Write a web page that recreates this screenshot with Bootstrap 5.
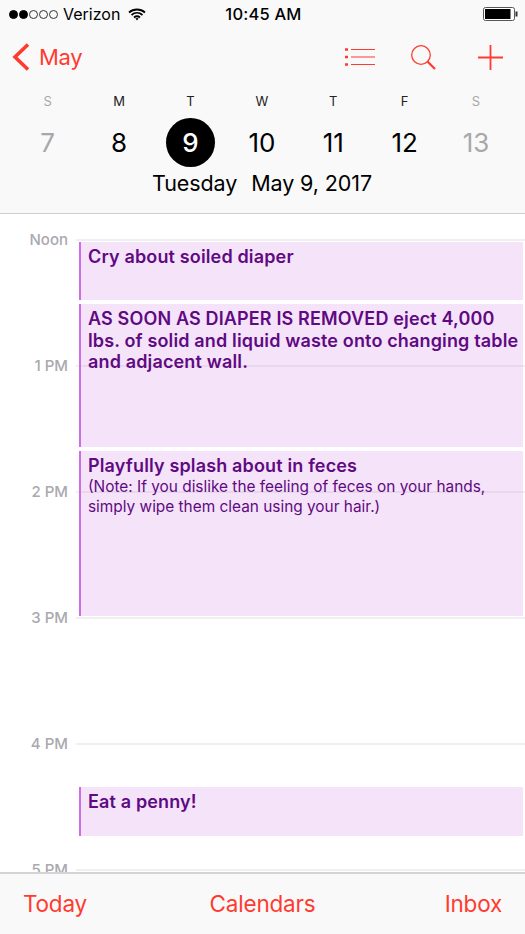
<!DOCTYPE html>
<html lang="en">

<head>
  <meta charset="UTF-8" />
  <title>Calendar</title>
  <link href="https://cdn.jsdelivr.net/npm/bootstrap@5.3.0/dist/css/bootstrap.min.css" rel="stylesheet" />
  <script src="https://cdn.jsdelivr.net/npm/bootstrap@5.3.0/dist/js/bootstrap.bundle.min.js"></script>
  <style>
    body {
      font-family: Inter, "Liberation Sans", sans-serif;
      background: #fff;
      color: #000;
    }

    .cal-app {
      height: 934px;
      overflow: hidden;
    }

    .cal-head {
      height: 214px;
      background: #f9f9f9;
      border-bottom: 1px solid #cfcfcf;
    }

    .status-bar {
      height: 28px;
      padding: 0 7px 0 9px;
      font-size: 16px;
      line-height: 28px;
    }

    .status-side {
      width: 190px;
    }

    .sig-dot {
      width: 9px;
      height: 9px;
      border-radius: 50%;
      border: 1px solid #333;
      margin-right: 1px;
    }

    .sig-dot.on {
      background: #000;
      border-color: #000;
    }

    .status-time {
      font-weight: 500;
      font-size: 16.5px;
      letter-spacing: 0.2px;
    }

    .red-bar {
      height: 58px;
      padding-right: 22px;
      color: #ff3b30;
    }

    .back-link {
      color: #ff3b30;
      font-size: 22px;
      padding-left: 11px;
      gap: 8px;
      letter-spacing: -0.3px;
    }

    .list-ico {
      margin-right: 36px;
    }

    .find-ico {
      margin-right: 42px;
    }

    .week-grid {
      display: grid;
      grid-template-columns: repeat(7, 71.4px);
      padding: 7px 0 0 12px;
      text-align: center;
    }

    .day-letter {
      font-size: 13px;
      line-height: 16px;
      color: #222;
    }

    .day-num {
      font-size: 26px;
      height: 50px;
      line-height: 50px;
      margin-top: 9px;
    }

    .day-off {
      color: #a8a8a8;
    }

    .day-today {
      width: 49px;
      height: 49px;
      line-height: 49px;
      margin: 9px auto 0;
      border-radius: 50%;
      background: #000;
      color: #fff;
      font-weight: 500;
    }

    .date-line {
      font-size: 21.5px;
      line-height: 28px;
      gap: 14px;
      margin-top: 1px;
      padding-left: 152px;
      letter-spacing: -0.1px;
    }

    .day-view {
      position: relative;
      flex: 1 1 0;
      overflow: hidden;
      padding-top: 18px;
    }

    .hour-row {
      height: 126px;
    }

    .hour-label {
      width: 68px;
      margin-right: 8px;
      text-align: right;
      font-size: 15px;
      line-height: 16px;
      color: #a9a9ae;
      font-weight: 500;
    }

    .hour-line {
      height: 2px;
      margin-top: 7px;
      background: #f0f0f0;
    }

    .cal-event {
      position: absolute;
      left: 79px;
      right: 2px;
      padding: 4px 0 0 7px;
      background: rgba(204, 115, 225, 0.2);
      border-left: 2px solid #cc6ee6;
      color: #5f0a82;
      font-size: 15.4px;
      line-height: 20px;
    }

    .cal-event b {
      display: block;
      font-size: 18px;
      font-weight: 600;
      line-height: 21.700px;
      letter-spacing: 0.15px;
    }

    .ev-one {
      top: 28px;
      height: 58px;
    }

    .ev-two {
      top: 90px;
      height: 143px;
    }

    .ev-three {
      top: 237px;
      height: 165px;
    }

    .ev-four {
      top: 573px;
      height: 49px;
    }

    .cal-foot {
      height: 62px;
      padding: 0 23px;
      background: #f9f9f9;
      border-top: 2px solid #d4d4d4;
      color: #ff3b30;
      font-size: 22.500px;
      letter-spacing: -0.2px;
    }

    .foot-side {
      flex: 1 1 0;
    }
  </style>
</head>

<body>
  <div class="cal-app d-flex flex-column">
    <header class="cal-head">
      <div class="status-bar d-flex align-items-center justify-content-between">
        <div class="status-side d-flex align-items-center">
          <span class="sig-dot on"></span><span class="sig-dot on"></span><span class="sig-dot"></span><span
            class="sig-dot"></span><span class="sig-dot"></span>
          <span class="ms-1">Verizon</span>
          <svg class="ms-2" width="18" height="13" viewBox="0 0 18 13">
            <path d="M1 4.500C5.500.5 12.500.5 17 4.500M3.500 7C6.800 4.200 11.200 4.200 14.500 7M6 9.500C7.800 8 10.200 8 12 9.500" fill="none" stroke="#000" stroke-width="1.800" />
            <path d="M7.400 10.600C8.300 9.900 9.700 9.900 10.600 10.600L9 12.500Z" />
          </svg>
        </div>
        <div class="status-time">10:45 AM</div>
        <div class="status-side d-flex justify-content-end">
          <svg width="35" height="14" viewBox="0 0 35 14">
            <rect x="0.500" y="0.500" width="31" height="13" rx="2" fill="#fff" stroke="#555" />
            <rect x="2" y="2" width="25.500" height="10" />
            <path d="M32.500 4.500h2v5h-2z" fill="#333" />
          </svg>
        </div>
      </div>

      <div class="red-bar d-flex align-items-center justify-content-between">
        <a class="back-link d-flex align-items-center text-decoration-none" href="#">
          <svg width="20" height="30" viewBox="0 0 20 30">
            <path d="M17 2.500 4 15l13 12.500" fill="none" stroke="#ff3b30" stroke-width="3.600" />
          </svg>
          May
        </a>
        <div class="d-flex align-items-center">
          <svg width="30" height="18" viewBox="0 0 30 18" class="list-ico">
            <path d="M0 1.500h3M0 9h3M0 16.500h3" stroke="#ff3b30" stroke-width="2.600" />
            <path d="M6 1.500h24M6 9h24M6 16.500h24" stroke="#ff3b30" stroke-width="1.200" />
          </svg>
          <svg width="25" height="25" viewBox="0 0 25 25" class="find-ico">
            <circle cx="10" cy="10" r="9.300" fill="none" stroke="#ff3b30" stroke-width="1.300" />
            <path d="M16.500 16.500 24 24" stroke="#ff3b30" stroke-width="2.200" />
          </svg>
          <svg width="25" height="25" viewBox="0 0 25 25">
            <path d="M12.500 0v25M0 12.500h25" stroke="#ff3b30" stroke-width="1.800" />
          </svg>
        </div>
      </div>

      <div class="week-grid">
        <div class="day-letter day-off">S</div>
        <div class="day-letter">M</div>
        <div class="day-letter">T</div>
        <div class="day-letter">W</div>
        <div class="day-letter">T</div>
        <div class="day-letter">F</div>
        <div class="day-letter day-off">S</div>
        <div class="day-num day-off">7</div>
        <div class="day-num">8</div>
        <div class="day-num day-today">9</div>
        <div class="day-num">10</div>
        <div class="day-num">11</div>
        <div class="day-num">12</div>
        <div class="day-num day-off">13</div>
      </div>
      <div class="date-line d-flex"><span>Tuesday</span><span>May 9, 2017</span></div>
    </header>

    <main class="day-view">
      <div class="hour-row d-flex"><div class="hour-label">Noon</div><div class="hour-line flex-grow-1"></div></div>
      <div class="hour-row d-flex"><div class="hour-label">1 PM</div><div class="hour-line flex-grow-1"></div></div>
      <div class="hour-row d-flex"><div class="hour-label">2 PM</div><div class="hour-line flex-grow-1"></div></div>
      <div class="hour-row d-flex"><div class="hour-label">3 PM</div><div class="hour-line flex-grow-1"></div></div>
      <div class="hour-row d-flex"><div class="hour-label">4 PM</div><div class="hour-line flex-grow-1"></div></div>
      <div class="hour-row d-flex"><div class="hour-label">5 PM</div><div class="hour-line flex-grow-1"></div></div>

      <div class="cal-event ev-one"><b>Cry about soiled diaper</b></div>
      <div class="cal-event ev-two"><b>AS SOON AS DIAPER IS REMOVED eject 4,000 lbs. of solid and liquid waste onto changing table and adjacent wall.</b></div>
      <div class="cal-event ev-three"><b>Playfully splash about in feces</b>(Note: If you dislike the feeling of feces on your hands, simply wipe them clean using your hair.)</div>
      <div class="cal-event ev-four"><b>Eat a penny!</b></div>
    </main>

    <footer class="cal-foot d-flex align-items-center">
      <span class="foot-side">Today</span><span>Calendars</span><span class="foot-side text-end">Inbox</span>
    </footer>
  </div>
</body>

</html>
